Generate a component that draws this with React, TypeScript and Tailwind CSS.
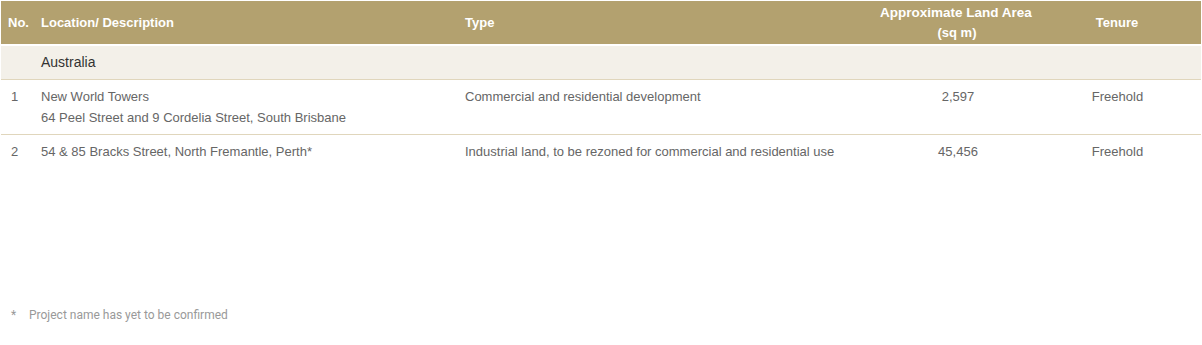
import React from "react";

const rows = [
  {
    no: "1",
    loc: ["New World Towers", "64 Peel Street and 9 Cordelia Street, South Brisbane"],
    type: "Commercial and residential development",
    area: "2,597",
    tenure: "Freehold",
  },
  {
    no: "2",
    loc: ["54 & 85 Bracks Street, North Fremantle, Perth*"],
    type: "Industrial land, to be rezoned for commercial and residential use",
    area: "45,456",
    tenure: "Freehold",
  },
];

export default function App() {
  return (
    <div className="w-[1202px] h-[345px] bg-white" style={{ fontFamily: '"Liberation Sans", Arial, sans-serif' }}>
      <div className="pt-[1px] pl-[1px] w-[1201px]">
        <div className="flex bg-[#b3a16f] text-white font-bold text-[13px] leading-[20px] pt-[2px] pb-[1px] border-b-[2px] border-white">
          <div className="w-[32px] pl-[7px] flex items-center">No.</div>
          <div className="w-[424px] pl-[8px] flex items-center">Location/ Description</div>
          <div className="w-[424px] pl-[8px] flex items-center">Type</div>
          <div className="w-[152px] text-center flex flex-col justify-center">
            <span className="text-[13.5px] -ml-[2px]">Approximate Land Area</span>
            <span>(sq m)</span>
          </div>
          <div className="flex-1 text-center flex items-center justify-center">Tenure</div>
        </div>
        <div className="flex bg-[#f3f0e9] border-b border-[#e0d6bc] py-[6px] text-[14px] leading-[21px] text-[#333]">
          <div className="w-[32px]"></div>
          <div className="pl-[8px]">Australia</div>
        </div>
        {rows.map((r) => (
          <div key={r.no} className="flex border-b border-[#e0d6bc] last:border-b-0 py-[6px] text-[13px] leading-[21px] text-[#666]">
            <div className="w-[32px] pl-[10px]">{r.no}</div>
            <div className="w-[424px] pl-[8px] flex flex-col">
              {r.loc.map((l) => (
                <span key={l}>{l}</span>
              ))}
            </div>
            <div className="w-[425px] pl-[8px]">{r.type}</div>
            <div className="w-[152px] text-center">{r.area}</div>
            <div className="flex-1 text-center">{r.tenure}</div>
          </div>
        ))}
      </div>
      <div
        className="mt-[139px] flex text-[12px] leading-[16px] text-[#999]"
        style={{ fontFamily: 'Roboto, "Liberation Sans", sans-serif' }}
      >
        <span className="pl-[11px] w-[29px]">*</span>
        <span>Project name has yet to be confirmed</span>
      </div>
    </div>
  );
}
